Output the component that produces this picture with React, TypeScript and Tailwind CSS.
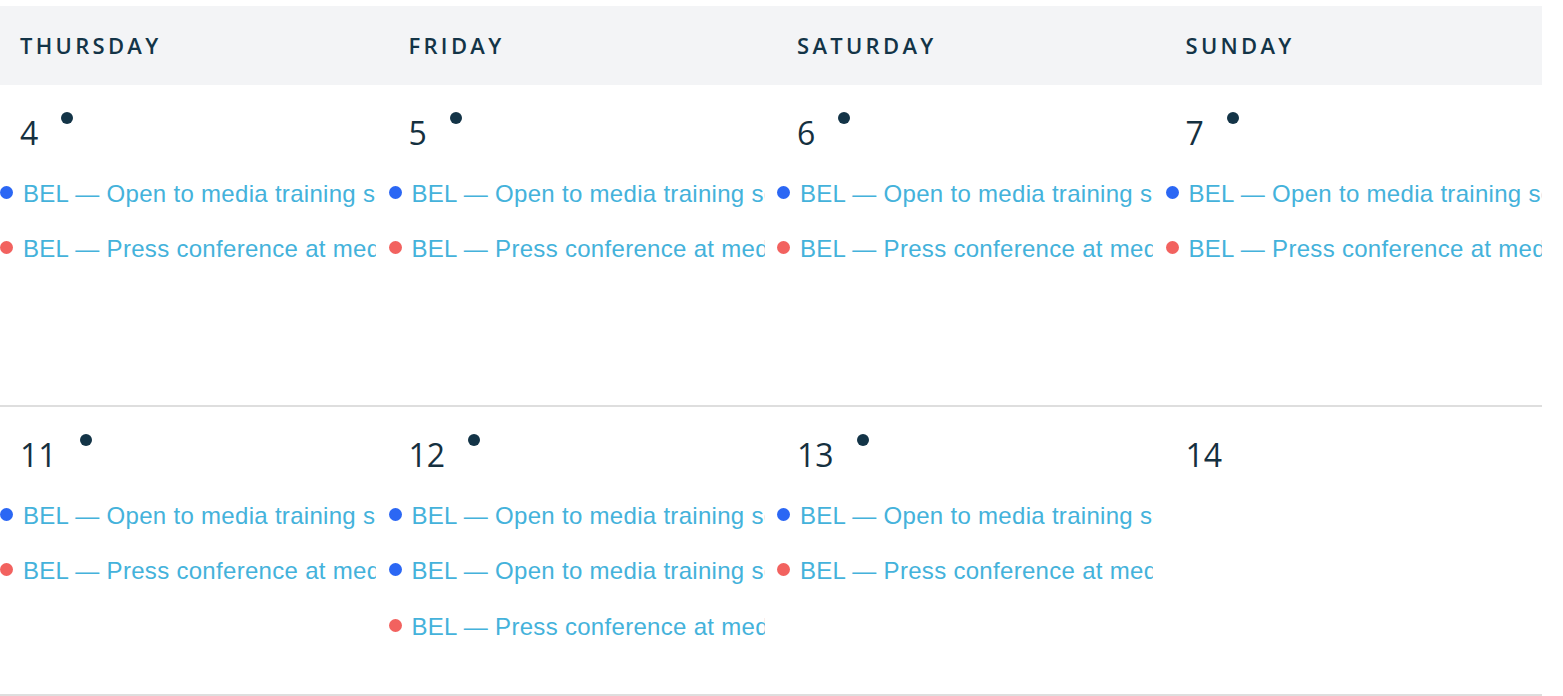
import React from 'react';

type Tone = 'blue' | 'red';

interface DayCell {
  day: number;
  marked: boolean;
  events: Tone[];
}

const weekdays = ['Thursday', 'Friday', 'Saturday', 'Sunday'];

const weeks: { height: string; days: DayCell[] }[] = [
  {
    height: 'h-[322px]',
    days: [
      { day: 4, marked: true, events: ['blue', 'red'] },
      { day: 5, marked: true, events: ['blue', 'red'] },
      { day: 6, marked: true, events: ['blue', 'red'] },
      { day: 7, marked: true, events: ['blue', 'red'] },
    ],
  },
  {
    height: 'h-[289px]',
    days: [
      { day: 11, marked: true, events: ['blue', 'red'] },
      { day: 12, marked: true, events: ['blue', 'blue', 'red'] },
      { day: 13, marked: true, events: ['blue', 'red'] },
      { day: 14, marked: false, events: [] },
    ],
  },
];

const titles: Record<Tone, string> = {
  blue: 'BEL — Open to media training session',
  red: 'BEL — Press conference at media center',
};

function EventRow({ tone }: { tone: Tone }) {
  return (
    <div className="flex items-center h-[55.5px] overflow-hidden whitespace-nowrap">
      <span
        className={`shrink-0 w-[13px] h-[13px] rounded-full -mt-[3px] ${
          tone === 'blue' ? 'bg-[#2b67f4]' : 'bg-[#f2625f]'
        }`}
      />
      <span className="ml-[10px] text-[24px] tracking-[0.3px] text-[#44b2db] font-['Liberation_Sans',Arial,sans-serif]">
        {titles[tone]}
      </span>
    </div>
  );
}

function DayColumn({ cell }: { cell: DayCell }) {
  return (
    <div className="w-[376px] overflow-hidden pt-[32px]">
      <div className="flex items-start pl-5 h-[32px]">
        <span className="text-[32px] leading-none text-[#15303f]">{cell.day}</span>
        {cell.marked && <span className="ml-[23px] -mt-[5px] w-[12px] h-[12px] rounded-full bg-[#133447]" />}
      </div>
      <div className="mt-[17px]">
        {cell.events.map((tone, i) => (
          <EventRow key={i} tone={tone} />
        ))}
      </div>
    </div>
  );
}

export default function App() {
  return (
    <div className="w-[1563px] h-[696px] bg-white pt-[6px] font-['Open_Sans',sans-serif] overflow-hidden">
      <div className="w-[1542px]">
        <div className="grid grid-cols-[repeat(4,376px)] gap-x-[12.5px] h-[79px] bg-[#f3f4f6] items-center">
          {weekdays.map((d) => (
            <div key={d} className="pl-5 text-[22px] font-semibold uppercase tracking-[0.15em] text-[#133447]">
              {d}
            </div>
          ))}
        </div>
        {weeks.map((week, i) => (
          <div
            key={i}
            className={`grid grid-cols-[repeat(4,376px)] gap-x-[12.5px] border-b-2 border-[#dedede] ${week.height}`}
          >
            {week.days.map((cell) => (
              <DayColumn key={cell.day} cell={cell} />
            ))}
          </div>
        ))}
      </div>
    </div>
  );
}
